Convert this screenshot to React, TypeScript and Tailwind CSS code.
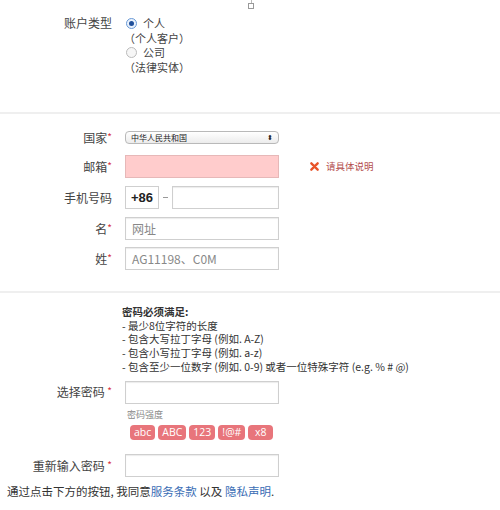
import React from "react"

const font = { fontFamily: '"Noto Sans CJK SC", "Noto Sans", sans-serif' }

function Star() {
  return <span className="text-[#d9333f] text-[10px] align-top">*</span>
}

function Label({ children }: { children: React.ReactNode }) {
  return (
    <div className="w-[112px] shrink-0 text-right text-[12px] text-[#444] leading-none">{children}</div>
  )
}

function Input({ value, placeholder, error }: { value?: string; placeholder?: string; error?: boolean }) {
  return (
    <div
      className={
        "h-[23px] flex items-center px-[6px] text-[12px] border " +
        (error
          ? "bg-[#ffcccc] border-[#e6b8b8]"
          : "bg-white border-[#cfcfcf] shadow-[inset_0_1px_1px_rgba(0,0,0,0.08)]")
      }
      style={{ width: "100%" }}
    >
      {placeholder ? <span className="text-[#888]">{placeholder}</span> : <span>{value}</span>}
    </div>
  )
}

function Radio({ checked }: { checked?: boolean }) {
  return (
    <span
      className={
        "w-[11px] h-[11px] rounded-full border flex items-center justify-center " +
        (checked ? "border-[#6a9ad6] bg-[#eaf2fc]" : "border-[#bbb] bg-[#f6f6f6]")
      }
    >
      {checked && <span className="w-[5px] h-[5px] rounded-full bg-[#1f4f9a]" />}
    </span>
  )
}

export default function App() {
  const badges = ["abc", "ABC", "123", "!@#", "x8"]
  return (
    <div className="w-[500px] h-[510px] bg-white relative overflow-hidden text-[#333]" style={font}>
      <div className="absolute left-[248px] top-[0px] flex flex-col items-center">
        <span className="w-px h-[3px] bg-[#bbb]" />
        <span className="w-[6px] h-[6px] border border-[#999]" />
      </div>

      {/* account type */}
      <div className="h-[112px] pt-[16px] flex gap-[14px]">
        <Label>
          <div className="pt-[1px]">账户类型</div>
        </Label>
        <div className="flex flex-col text-[11px] text-[#444] leading-[14.5px]">
          <div className="flex items-center gap-[6px]">
            <Radio checked />
            <span>个人</span>
          </div>
          <div className="-ml-[2px]">（个人客户）</div>
          <div className="flex items-center gap-[6px]">
            <Radio />
            <span>公司</span>
          </div>
          <div className="-ml-[2px]">（法律实体）</div>
        </div>
      </div>

      <div className="h-[2px] bg-[#efefef]" />

      {/* contact */}
      <div className="pt-[17px] pb-[21px] flex flex-col">
        <div className="flex items-center gap-[13px]">
          <Label>
            国家<Star />
          </Label>
          <div className="w-[154px] h-[13px] rounded-[4px] border border-[#b9b9b9] bg-gradient-to-b from-white to-[#ececec] flex items-center justify-between px-[5px] text-[8px] text-[#222]">
            <span>中华人民共和国</span>
            <span className="text-[7px] leading-none">⬍</span>
          </div>
        </div>
        <div className="flex items-center gap-[13px] mt-[11px]">
          <Label>
            邮箱<Star />
          </Label>
          <div className="w-[154px]">
            <Input error />
          </div>
          <div className="ml-[18px] flex items-center gap-[7px] text-[9.5px] text-[#b4504f]">
            <svg width="9" height="9" viewBox="0 0 10 10">
              <path d="M1.5 1.5 L8.5 8.5 M8.5 1.5 L1.5 8.5" stroke="#e8542a" strokeWidth="2.6" strokeLinecap="round" />
            </svg>
            <span>请具体说明</span>
          </div>
        </div>
        <div className="flex items-center gap-[13px] mt-[8px]">
          <Label>手机号码</Label>
          <div className="w-[154px] flex items-center">
            <div className="w-[34px] h-[23px] border border-[#cfcfcf] flex items-center justify-center text-[13px] font-bold text-[#222]" style={{ fontFamily: '"Liberation Sans", sans-serif' }}>
              +86
            </div>
            <span className="w-[13px] flex justify-center">
              <span className="w-[5px] h-px bg-[#999]" />
            </span>
            <div className="flex-1">
              <Input />
            </div>
          </div>
        </div>
        <div className="flex items-center gap-[13px] mt-[8px]">
          <Label>
            名<Star />
          </Label>
          <div className="w-[154px]">
            <Input placeholder="网址" />
          </div>
        </div>
        <div className="flex items-center gap-[13px] mt-[7px]">
          <Label>
            姓<Star />
          </Label>
          <div className="w-[154px]">
            <Input placeholder="AG11198、C0M" />
          </div>
        </div>
      </div>

      <div className="h-[2px] bg-[#efefef]" />

      {/* password */}
      <div className="pt-[12px] flex flex-col">
        <div className="pl-[122px] text-[10.5px] leading-[13.7px] text-[#333]">
          <div className="font-bold">密码必须满足:</div>
          <div>- 最少8位字符的长度</div>
          <div>- 包含大写拉丁字母 (例如. A-Z)</div>
          <div>- 包含小写拉丁字母 (例如. a-z)</div>
          <div>- 包含至少一位数字 (例如. 0-9) 或者一位特殊字符 (e.g. % # @)</div>
        </div>
        <div className="flex items-center gap-[13px] mt-[7px]">
          <Label>
            选择密码 <Star />
          </Label>
          <div className="w-[154px]">
            <Input />
          </div>
        </div>
        <div className="pl-[127px] mt-[4px] text-[9px] text-[#888]">密码强度</div>
        <div className="pl-[130px] mt-[4px] flex gap-[3px]">
          {badges.map((b) => (
            <span
              key={b}
              className="h-[15px] px-[4px] rounded-[4px] bg-[#e8757b] text-white text-[10.5px] leading-[15px] min-w-[25px] text-center"
              style={{ fontFamily: '"Open Sans", sans-serif' }}
            >
              {b}
            </span>
          ))}
        </div>
        <div className="flex items-center gap-[13px] mt-[14px]">
          <Label>
            重新输入密码 <Star />
          </Label>
          <div className="w-[154px]">
            <Input />
          </div>
        </div>
        <div className="pl-[7px] mt-[6px] text-[11.5px] text-[#333]">
          通过点击下方的按钮, 我同意<span className="text-[#3a6db5]">服务条款</span> 以及{" "}
          <span className="text-[#3a6db5]">隐私声明</span>.
        </div>
      </div>
    </div>
  )
}
